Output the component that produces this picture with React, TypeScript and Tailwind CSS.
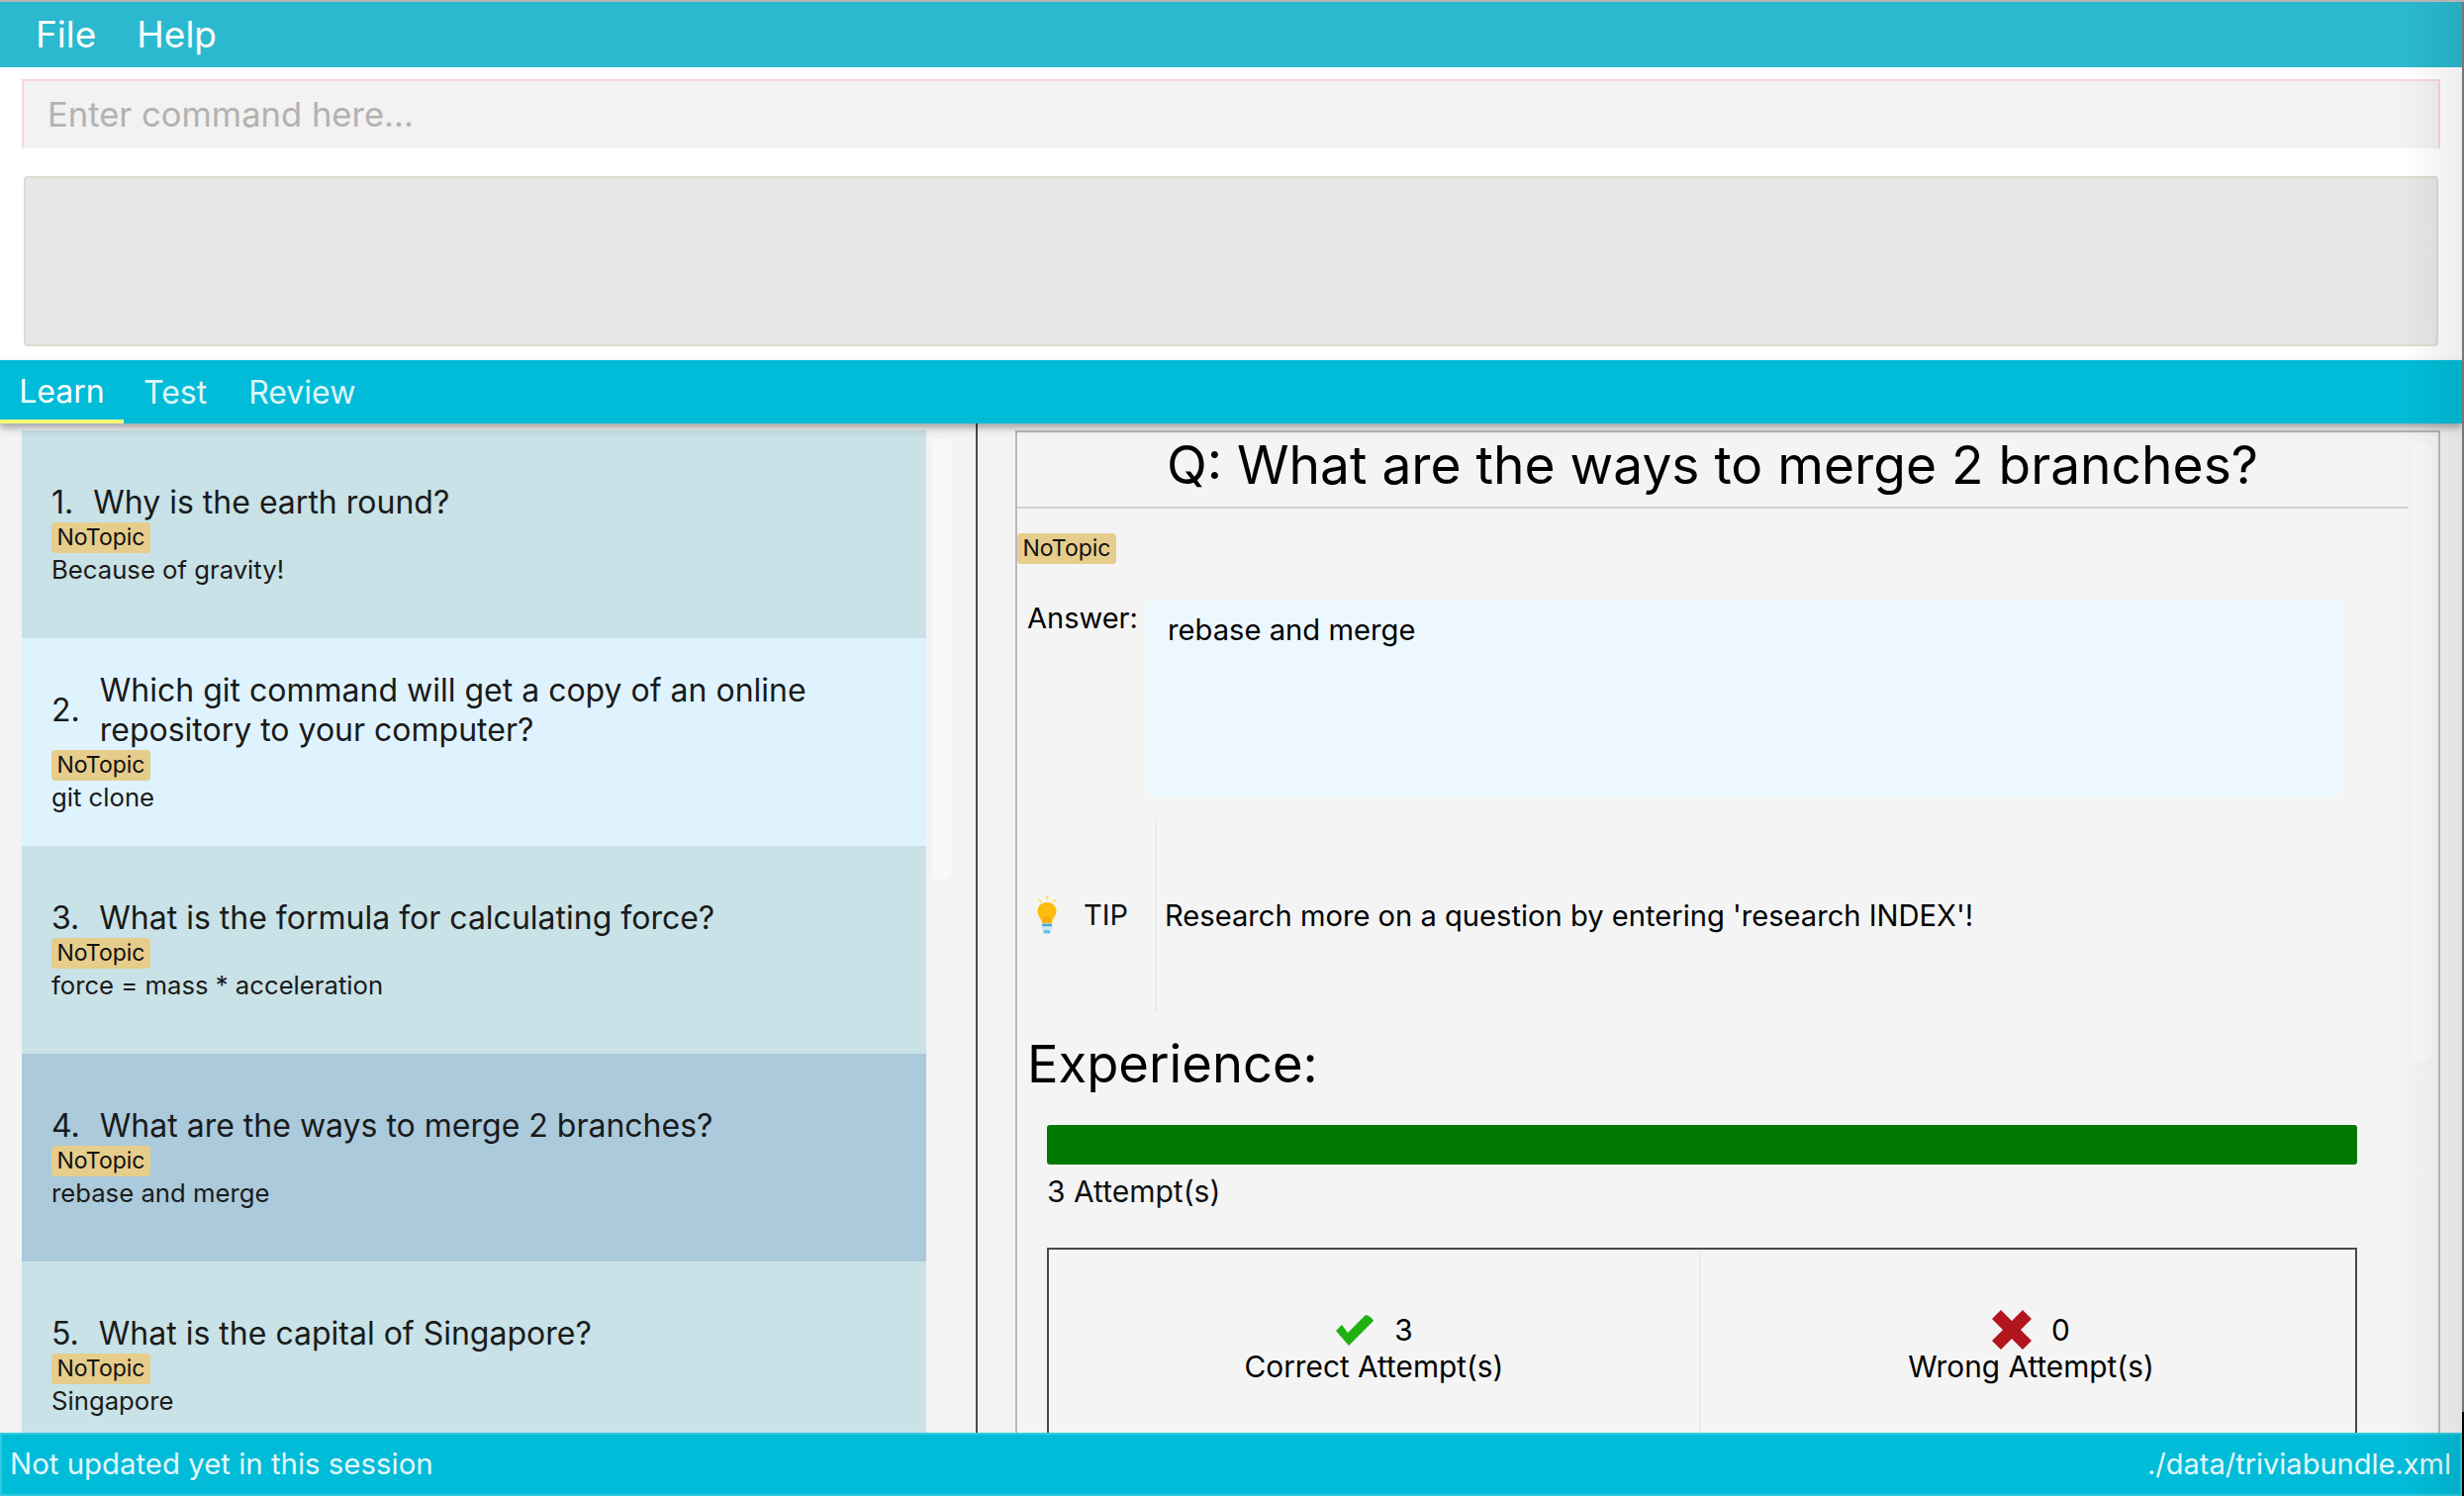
const font = { fontFamily: "Inter, 'Liberation Sans', sans-serif" };

function Tag() {
  return <span className="inline-flex h-[31px] w-[100px] items-center justify-center rounded-[4px] bg-[#e6cd8c] text-[23px] text-[#111]">NoTopic</span>;
}

function Card({ n, q, a, bg, two }: { n: string; q: React.ReactNode; a: string; bg: string; two?: boolean }) {
  return (
    <div className={`${bg} flex h-[210px] shrink-0 flex-col justify-center pl-[30px]`}>
      <div className={`flex items-center gap-[20px] text-[32px] leading-[40px] text-[#1a1a1a] ${two ? "h-[80px]" : "h-[40px]"}`}>
        <span>{n}</span>
        <span>{q}</span>
      </div>
      <div className="flex"><Tag /></div>
      <div className="text-[25.700px] leading-[34px] text-[#1a1a1a]">{a}</div>
    </div>
  );
}

function Bulb() {
  return (
    <svg width="20" height="40" viewBox="0 0 20 40" className="shrink-0">
      <g stroke="#fbe27a" strokeWidth="2">
        <path d="M10 0v4M1 4l3.500 3M19 4l-3.500 3" />
      </g>
      <path d="M10 7c-5.500 0-9.500 3.800-9.500 9 0 4.500 3.500 6.500 4.500 12h10c1-5.500 4.500-7.500 4.500-12 0-5.200-4-9-9.500-9z" fill="#fdbb0d" />
      <path d="M7.500 28v-6h5v6M7.500 24h5" fill="none" stroke="#f59e0b" strokeWidth="1" />
      <rect x="5" y="28.500" width="10" height="3" fill="#4aa9d6" />
      <rect x="4.500" y="31.500" width="11" height="3.500" rx="1" fill="#cfeaf6" />
      <rect x="6.500" y="35" width="7" height="3.500" rx="1" fill="#6dbfe2" />
    </svg>
  );
}

export default function App() {
  return (
    <div style={font} className="relative flex h-[1512px] w-[2490px] flex-col overflow-hidden bg-white">
      <div className="h-[2px] shrink-0 bg-[#b5b5b5]" />
      <div className="flex flex-1 flex-col overflow-hidden border-r-[2px] border-[#777]">
        <div className="flex h-[66px] shrink-0 items-center gap-[41px] bg-[#2ab9cf] pl-[36px] text-[37px] text-white">
          <span>File</span>
          <span>Help</span>
        </div>
        <div className="shrink-0 px-[22px] pt-[12px]">
          <div className="flex h-[70px] w-[2444px] items-center border-x-[2px] border-t-[2px] border-[#fbd5d5] bg-[#f2f2f2] pl-[24px] text-[34.600px] text-[#b5b1b1]">Enter command here...</div>
        </div>
        <div className="shrink-0 px-[24px] pt-[28px]">
          <div className="h-[172px] w-[2440px] rounded-[4px] border-[2px] border-[#dfdbd0] bg-[#e7e7e7]" />
        </div>
        <div className="relative z-10 mt-[14px] flex h-[64px] shrink-0 bg-[#00bcd8] text-[32px] shadow-[0_4px_8px_rgba(0,0,0,0.35)]">
          <div className="flex w-[125px] items-center justify-center border-b-[4px] border-[#fdf97a] pt-[4px] text-white">Learn</div>
          <div className="flex items-center pl-[20px] pt-[1px] text-[#dff6fa]">Test</div>
          <div className="flex items-center pl-[42px] pt-[1px] text-[#dff6fa]">Review</div>
        </div>
        <div className="flex min-h-0 flex-1 bg-[#f3f3f3]">
          <div className="flex w-[988px] shrink-0 border-r-[2px] border-[#4a4a4a] pl-[22px]">
            <div className="flex w-[914px] shrink-0 flex-col overflow-hidden pt-[7px]">
              <Card n="1." q="Why is the earth round?" a="Because of gravity!" bg="bg-[#c8e2e7]" />
              <Card n="2." q={<>Which git command will get a copy of an online<br />repository to your computer?</>} a="git clone" bg="bg-[#dff3fe]" two />
              <Card n="3." q="What is the formula for calculating force?" a="force = mass * acceleration" bg="bg-[#c8e2e7]" />
              <Card n="4." q="What are the ways to merge 2 branches?" a="rebase and merge" bg="bg-[#abcadc]" />
              <Card n="5." q="What is the capital of Singapore?" a="Singapore" bg="bg-[#c8e2e7]" />
            </div>
            <div className="ml-[6px] mt-[15px] h-[446px] w-[20px] rounded-[6px] bg-[#f9f9f9]" />
          </div>
          <div className="relative ml-[38px] mt-[7px] flex w-[1440px] shrink-0 flex-col overflow-hidden border-x-[2px] border-t-[2px] border-[#b9b9b9] bg-[#f4f4f4]">
            <div className="absolute right-[6px] top-[10px] h-[626px] w-[20px] rounded-[6px] bg-[#f8f8f8]" />
            <div className="mr-[31px] h-[77px] shrink-0 border-b-[2px] border-[#cfcfcf] text-center text-[53.300px] leading-[65px] text-black">Q: What are the ways to merge 2 branches?</div>
            <div className="mt-[25px] flex shrink-0"><Tag /></div>
            <div className="mt-[36px] flex h-[200px] shrink-0">
              <div className="w-[131px] shrink-0 pl-[10px] pt-[1px] text-[29px] leading-[36px] text-black">Answer:</div>
              <div className="w-[1207px] rounded-[6px] bg-[#edf8fe] pl-[21px] pt-[11px] text-[29.200px] leading-[40px] text-black">rebase and merge</div>
            </div>
            <div className="mt-[21px] flex h-[196px] shrink-0 items-center">
              <div className="flex w-[141px] shrink-0 items-center self-stretch border-r-[2px] border-[#ebebeb] pl-[20px]">
                <Bulb />
                <span className="ml-[27px] text-[29px] text-[#111]">TIP</span>
              </div>
              <span className="pl-[8px] pt-[2px] text-[29.150px] text-black">Research more on a question by entering 'research INDEX'!</span>
            </div>
            <div className="mt-[20px] shrink-0 pl-[10px] text-[52.500px] leading-[64px] text-black">Experience:</div>
            <div className="ml-[30px] mt-[30px] flex w-[1324px] shrink-0 flex-col">
              <div className="h-[40px] rounded-[3px] bg-[#017901]" />
              <div className="mt-[9px] text-[30px] leading-[36px] text-[#111]">3 Attempt(s)</div>
              <div className="mt-[39px] grid h-[300px] grid-cols-[659px_1fr] border-[2px] border-[#4a4a4a]">
                <div className="flex flex-col items-center border-r-[2px] border-[#ebebeb] pt-[65px]">
                  <div className="flex h-[32px] items-center gap-[20px] text-[29.800px] text-black">
                    <svg width="40" height="32" viewBox="0 0 40 32"><path d="M1 17l6-6 6 8L31 1c2 0 7 3 8 6L14 32 1 17z" fill="#1fb012" /></svg>
                    <span>3</span>
                  </div>
                  <div className="mt-[3px] text-[29.800px] leading-[36px] text-black">Correct Attempt(s)</div>
                </div>
                <div className="flex flex-col items-center pl-[6px] pt-[65px]">
                  <div className="flex h-[32px] items-center gap-[20px] text-[29.800px] text-black">
                    <svg width="40" height="40" viewBox="0 0 40 40" className="shrink-0"><path d="M9 0l11 11L31 0l9 9-11 11 11 11-9 9-11-11L9 40l-9-9 11-11L0 9z" fill="#b3151e" /></svg>
                    <span>0</span>
                  </div>
                  <div className="mt-[3px] text-[29.800px] leading-[36px] text-black">Wrong Attempt(s)</div>
                </div>
              </div>
            </div>
          </div>
        </div>
      </div>
      <div className="z-20 -mt-[64px] flex h-[64px] w-[2488px] shrink-0 items-center justify-between border-[2px] border-[#2ecbe0] bg-[#00bcd8] pl-[8px] pr-[9px] text-[#e4f8fb]">
        <span className="text-[29.400px]">Not updated yet in this session</span>
        <span className="text-[29px]">./data/triviabundle.xml</span>
      </div>
      <div className="absolute bottom-0 right-0 z-30 h-[85px] w-[2px] bg-black" />
      <div className="pointer-events-none absolute bottom-0 right-[2px] top-[2px] z-30 w-[60px] bg-gradient-to-r from-transparent to-black/[0.07]" />
    </div>
  );
}
